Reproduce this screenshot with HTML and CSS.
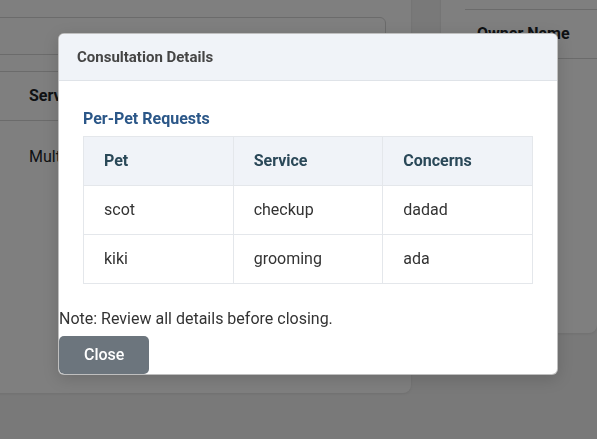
FILE: index.html
```html
<!DOCTYPE html>
<html>
<head>
<meta charset="utf-8">
<link rel="stylesheet" href="styles.css">
</head>
<body>
<div class="page">
  <div class="card left-card">
    <div class="search-box"></div>
    <table class="bg-table">
      <thead><tr><th>Service</th></tr></thead>
      <tbody><tr><td>Multiple</td></tr></tbody>
    </table>
  </div>
  <div class="card right-card">
    <table class="bg-table owner-table">
      <thead><tr><th>Owner Name</th></tr></thead>
    </table>
  </div>
</div>

<div class="overlay"></div>
<div class="modal">
  <div class="modal-header">Consultation Details</div>
  <div class="modal-body">
    <h3 class="section-title">Per-Pet Requests</h3>
    <table class="pet-table">
      <thead>
        <tr><th>Pet</th><th>Service</th><th>Concerns</th></tr>
      </thead>
      <tbody>
        <tr><td>scot</td><td>checkup</td><td>dadad</td></tr>
        <tr><td>kiki</td><td>grooming</td><td>ada</td></tr>
      </tbody>
    </table>
  </div>
  <p class="note">Note: Review all details before closing.</p>
  <button class="close-btn">Close</button>
</div>
</body>
</html>
```

FILE: styles.css
```css
* { box-sizing: border-box; }
html, body {
  margin: 0;
  padding: 0;
  height: 100%;
  overflow: hidden;
}
body {
  background: #f2f2f2;
  font-family: Roboto, "Noto Sans", Arial, sans-serif;
  color: #212529;
  font-size: 16px;
}
.page {
  display: flex;
  gap: 30px;
  align-items: flex-start;
}
.card {
  background: #fff;
  border-radius: 8px;
  box-shadow: 0 1px 3px rgba(0,0,0,0.08);
}
.left-card {
  width: 431px;
  height: 413px;
  margin-left: -20px;
  margin-top: -20px;
  padding: 37px 0 0 0;
}
.search-box {
  width: 406px;
  height: 38px;
  border: 1px solid #d6d6d6;
  border-radius: 6px;
}
.bg-table {
  border-collapse: collapse;
  margin-top: 16px;
  width: 100%;
}
.bg-table th, .bg-table td {
  text-align: left;
  padding: 12px 12px 12px 49px;
  line-height: 24px;
  font-size: 16px;
}
.bg-table th {
  font-weight: 700;
  border-top: 1px solid #d6d6d6;
  border-bottom: 1px solid #d6d6d6;
}
.bg-table td {
  padding-top: 24px;
  padding-bottom: 24px;
}
.right-card {
  flex: 1;
  height: 353px;
  margin-top: -20px;
  padding: 29px 0 0 24px;
}
.owner-table {
  margin-top: 0;
}
.owner-table th {
  padding-left: 12px;
}

.overlay {
  position: fixed;
  inset: 0;
  background: rgba(0,0,0,0.5);
}
.modal {
  position: absolute;
  top: 33px;
  left: 58px;
  width: 500px;
  background: #fff;
  border: 1px solid rgba(0,0,0,0.25);
  border-radius: 6px;
  overflow: hidden;
  box-shadow: 0 4px 16px rgba(0,0,0,0.15);
}
.modal-header {
  background: #f0f3f8;
  height: 47px;
  padding: 0 18px;
  display: flex;
  align-items: center;
  font-size: 15px;
  font-weight: 700;
  color: #454545;
  border-bottom: 1px solid #dfe3e8;
}
.modal-body {
  padding: 26px 24px 23px;
}
.section-title {
  margin: 0 0 5px;
  font-size: 16px;
  line-height: 24px;
  font-weight: 700;
  color: #2b5788;
}
.pet-table {
  width: 100%;
  border-collapse: collapse;
  table-layout: fixed;
}
.pet-table th, .pet-table td {
  border: 1px solid #e4e7eb;
  padding: 12px 20px;
  line-height: 24px;
  text-align: left;
  font-size: 16px;
}
.pet-table th {
  background: #f0f3f8;
  color: #2a4858;
  font-weight: 700;
}
.pet-table td {
  color: #333;
}
.note {
  margin: 0 0 5px;
  line-height: 24px;
  font-size: 16px;
  color: #333;
}
.close-btn {
  display: block;
  font-family: Roboto, "Noto Sans", Arial, sans-serif;
  font-size: 16px;
  font-weight: 500;
  line-height: 24px;
  padding: 7px 25px;
  border: none;
  border-radius: 5px;
  background: #6c757d;
  color: #fff;
}
```
